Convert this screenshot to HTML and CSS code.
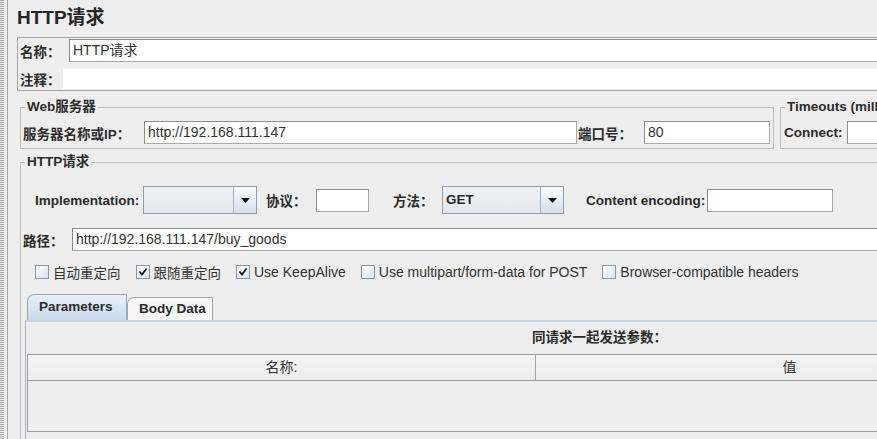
FILE: index.html
```html
<!DOCTYPE html>
<html lang="zh-CN">
<head>
<meta charset="utf-8">
<title>HTTP请求</title>
<link rel="stylesheet" href="styles.css">
</head>
<body>
<div class="app">
  <div class="split"></div>
  <div class="main">
    <h1 class="title">HTTP请求</h1>

    <div class="namebox">
      <div class="nrow nrow-name">
        <span class="lbl w-name">名称：</span>
        <div class="input grow">HTTP请求</div>
      </div>
      <div class="nrow nrow-cmt">
        <span class="lbl w-cmt">注释：</span>
        <div class="plainfield grow"></div>
      </div>
    </div>

    <div class="server-row">
      <fieldset class="group web">
        <legend>Web服务器</legend>
        <div class="frow">
          <span class="lbl w-server">服务器名称或IP：</span>
          <div class="input w-serverin">http://192.168.111.147</div>
          <span class="lbl w-port">端口号：</span>
          <div class="input w-portin">80</div>
        </div>
      </fieldset>
      <fieldset class="group timeouts">
        <legend>Timeouts (milliseconds)</legend>
        <div class="frow trow">
          <span class="lbl w-connect">Connect:</span>
          <div class="input w-connectin"></div>
        </div>
      </fieldset>
    </div>

    <fieldset class="group http">
      <legend>HTTP请求</legend>

      <div class="impl-row">
        <span class="lbl w-impl">Implementation:</span>
        <div class="combo w-combo1">
          <div class="combo-value"></div>
          <div class="combo-btn"><svg width="9" height="5" viewBox="0 0 9 5"><polygon points="0,0 9,0 4.5,5"/></svg></div>
        </div>
        <span class="lbl w-proto">协议：</span>
        <div class="input w-protoin"></div>
        <span class="lbl w-method">方法：</span>
        <div class="combo w-combo2">
          <div class="combo-value">GET</div>
          <div class="combo-btn"><svg width="9" height="5" viewBox="0 0 9 5"><polygon points="0,0 9,0 4.5,5"/></svg></div>
        </div>
        <span class="lbl w-enc">Content encoding:</span>
        <div class="input w-encin"></div>
      </div>

      <div class="path-row">
        <span class="lbl w-path">路径：</span>
        <div class="input grow">http://192.168.111.147/buy_goods</div>
      </div>

      <div class="check-row">
        <label class="check zh"><span class="cb"></span>自动重定向</label>
        <label class="check zh"><span class="cb"><svg viewBox="0 0 14 14"><path d="M3.5 7.2 L5.8 10 L10.5 3.8"/></svg></span>跟随重定向</label>
        <label class="check"><span class="cb"><svg viewBox="0 0 14 14"><path d="M3.5 7.2 L5.8 10 L10.5 3.8"/></svg></span>Use KeepAlive</label>
        <label class="check"><span class="cb"></span>Use multipart/form-data for POST</label>
        <label class="check"><span class="cb"></span>Browser-compatible headers</label>
      </div>

      <div class="tabs">
        <div class="tab active">Parameters</div>
        <div class="tab">Body Data</div>
      </div>
      <div class="tab-panel">
        <div class="caption">同请求一起发送参数：</div>
        <div class="tbl">
          <div class="thead">
            <div class="th th-name">名称:</div>
            <div class="th th-value">值</div>
          </div>
          <div class="tbody"></div>
        </div>
      </div>
    </fieldset>
  </div>
</div>
</body>
</html>
```

FILE: styles.css
```css
* { box-sizing: border-box; }
html, body { margin: 0; padding: 0; }
body {
  width: 877px;
  height: 439px;
  overflow: hidden;
  background: #eeeeee;
  font-family: "Liberation Sans", "Noto Sans CJK SC", sans-serif;
  font-size: 14px;
  color: #333333;
}

.app { display: flex; height: 439px; }

.split {
  flex: 0 0 8px;
  border-right: 1px solid #a9a9a9;
  background-image:
    repeating-linear-gradient(to bottom, #a6a6a6 0 1px, transparent 1px 2px),
    repeating-linear-gradient(to right, transparent 0 1px, #eeeeee 1px 2px);
  background-size: 4px 100%, 4px 100%;
  background-repeat: no-repeat;
}

.main { flex: 0 0 1200px; padding-left: 9px; }

.title {
  margin: 6px 0 0;
  font-size: 19px;
  line-height: 24px;
  font-weight: bold;
  color: #262626;
}

.lbl {
  flex: none;
  font-weight: bold;
  font-size: 13.5px;
  color: #2b2b2b;
  white-space: nowrap;
}

.input {
  flex: none;
  height: 23px;
  background: #ffffff;
  border: 1px solid #a9a9a9;
  border-top-color: #8e8e8e;
  border-left-color: #8e8e8e;
  padding: 0 3px;
  line-height: 21px;
  font-size: 14px;
  color: #333;
  white-space: nowrap;
  overflow: hidden;
}
.grow { flex: 1 1 auto; }

/* name / comment box */
.namebox {
  margin-top: 7px;
  border: 1px solid #a6a6a6;
  padding: 1px 0 1px 2px;
}
.nrow { display: flex; align-items: center; }
.nrow-name { height: 23px; }
.nrow-cmt { height: 20px; margin-top: 7px; }
.w-name { width: 49px; }
.w-cmt { width: 43px; }
.plainfield { height: 20px; background: #ffffff; }

/* titled groups */
.group {
  margin: 0;
  padding: 0;
  min-inline-size: 0;
  border: 1px solid #bdbdbd;
}
.group legend {
  margin-left: 4px;
  padding: 0 2px;
  font-weight: bold;
  font-size: 13.5px;
  line-height: 16px;
  color: #2b2b2b;
}

.server-row { display: flex; margin-top: 8px; margin-left: 3px; }
.web { flex: 0 0 754px; }
.timeouts { flex: 1 1 auto; margin-left: 6px; }
.frow {
  display: flex;
  align-items: center;
  height: 23px;
  margin: 6px 3px 4px 2px;
}
.trow { margin-left: 3px; }
.w-server { width: 121px; }
.w-serverin { width: 433px; }
.w-port { width: 66px; margin-left: 1px; }
.w-portin { width: 126px; }
.w-connect { width: 63px; }
.w-connectin { width: 80px; }

.http { margin-top: 5px; margin-left: 3px; height: 300px; }

.impl-row {
  display: flex;
  align-items: center;
  height: 28px;
  margin-top: 16px;
  padding-left: 14px;
}
.w-impl { width: 108px; }
.w-proto { width: 50px; margin-left: 9px; }
.w-protoin { width: 53px; }
.w-method { width: 49px; margin-left: 24px; }
.w-enc { width: 121px; margin-left: 22px; }
.w-encin { width: 126px; }

.combo {
  flex: none;
  display: flex;
  height: 28px;
  border: 1px solid #8d9caf;
  background: linear-gradient(#eef2f6, #e2e8ee);
}
.w-combo1 { width: 114px; }
.w-combo2 { width: 122px; }
.combo-value {
  flex: 1 1 auto;
  padding-left: 3px;
  line-height: 26px;
  font-weight: bold;
  font-size: 13.5px;
  color: #2b2b2b;
}
.combo-btn {
  flex: 0 0 23px;
  border-left: 1px solid #a3b1c1;
  background: linear-gradient(#fbfcfd, #d3dfec);
  display: flex;
  align-items: center;
  justify-content: center;
}
.combo-btn svg { fill: #111111; }

.path-row {
  display: flex;
  align-items: center;
  height: 23px;
  margin-top: 14px;
  padding-left: 2px;
}
.w-path { width: 49px; }

.check-row {
  display: flex;
  align-items: center;
  gap: 15px;
  height: 18px;
  margin-top: 12px;
  padding-left: 14px;
}
.check {
  display: flex;
  align-items: center;
  gap: 4px;
  white-space: nowrap;
  font-size: 14px;
  color: #333;
}
.check.zh { font-size: 13.5px; }
.cb {
  flex: none;
  width: 14px;
  height: 14px;
  border: 1px solid #8597ab;
  background: linear-gradient(135deg, #ffffff, #d7e2ee);
  display: flex;
}
.cb svg { width: 12px; height: 12px; }
.cb path { fill: none; stroke: #111; stroke-width: 2; stroke-linecap: square; }

.tabs {
  display: flex;
  align-items: flex-end;
  height: 26px;
  margin-top: 13px;
  padding-left: 6px;
}
.tab {
  height: 23px;
  width: 86px;
  border: 1px solid #9aa8b8;
  border-bottom: none;
  border-top-left-radius: 7px;
  background: #f6f6f6;
  padding-left: 11px;
  line-height: 22px;
  font-weight: bold;
  font-size: 13.5px;
  color: #2b2b2b;
}
.tab.active {
  height: 26px;
  width: 100px;
  line-height: 24px;
  background: linear-gradient(#e9f0f8, #c9daec);
}

.tab-panel {
  margin-left: 4px;
  width: 1148px;
  height: 140px;
  border-left: 1px solid #a2b4c9;
  border-top: 2px solid #c5d5e7;
}
.caption {
  height: 32px;
  line-height: 32px;
  text-align: center;
  font-weight: bold;
  font-size: 13.5px;
  color: #2b2b2b;
}
.tbl {
  margin-left: 1px;
  width: 1016px;
  border: 1px solid #9c9c9c;
  border-right: none;
}
.thead {
  display: flex;
  height: 26px;
  border-bottom: 1px solid #9c9c9c;
  background: linear-gradient(#f4f4f4, #ececec);
}
.th {
  line-height: 25px;
  text-align: center;
  font-size: 14px;
  color: #333;
}
.th-name { flex: 0 0 507px; }
.th-value { flex: 0 0 508px; border-left: 1px solid #a3a3a3; }
.tbody { height: 50px; background: #eeeeee; }
```
